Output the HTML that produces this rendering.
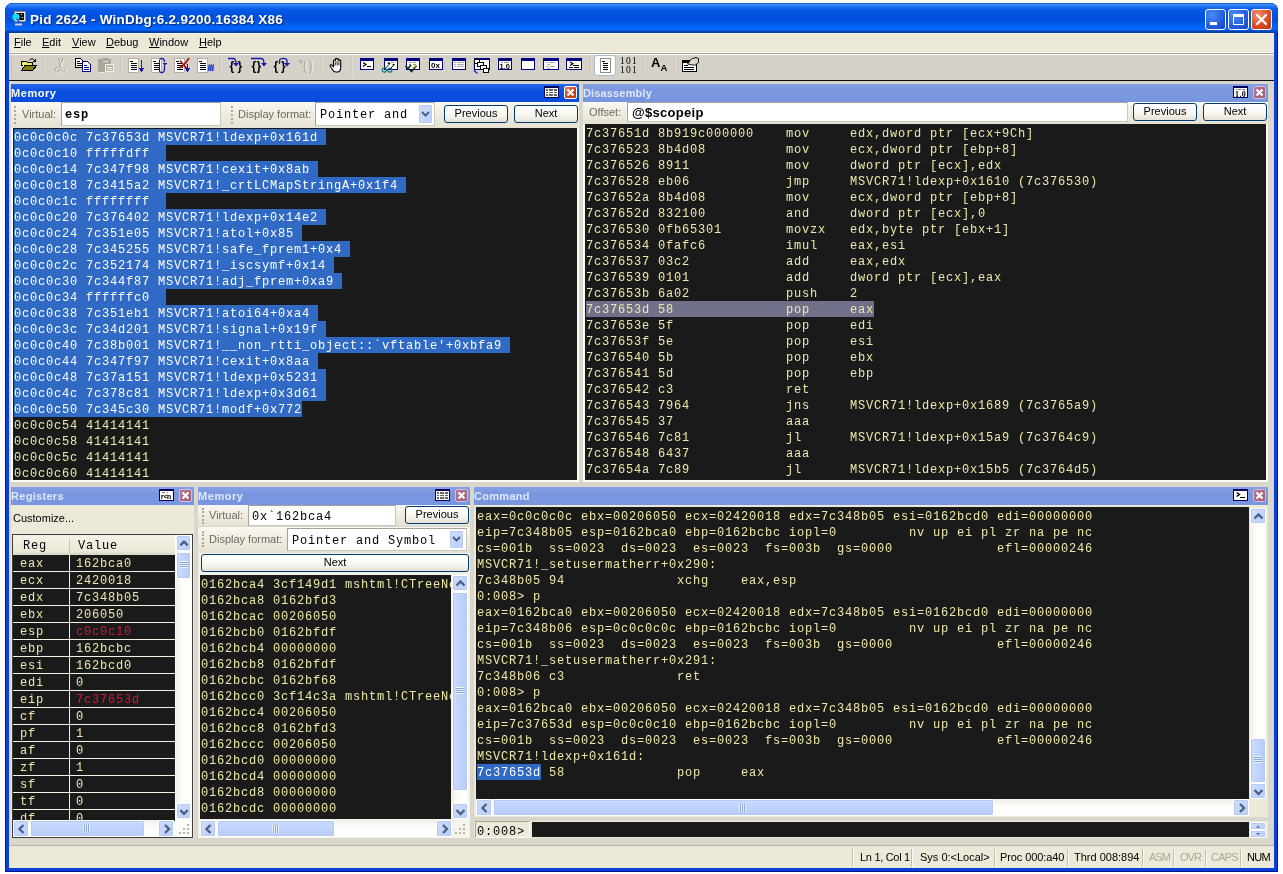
<!DOCTYPE html>
<html lang="en"><head><meta charset="utf-8"><title>Pid 2624 - WinDbg:6.2.9200.16384 X86</title>
<style>
html,body{margin:0;padding:0}
body{width:1283px;height:874px;overflow:hidden;background:#fff;position:relative;font-family:"Liberation Sans",sans-serif;font-size:11px;color:#000}
div,span{box-sizing:border-box}
.abs,.blk,.ttl,.tb,.btn,.inp,.sbv,.sbh,.ico{position:absolute}
.mono{font-family:"Liberation Mono",monospace;font-size:12px;letter-spacing:.8px;line-height:16px;white-space:pre;color:#eee8aa}
.blk{background:#1a1a1a;overflow:hidden;padding:1px 0 0 1px;white-space:normal}
.ln{height:16px;white-space:pre;line-height:18px}
.sel{background:#316ac5;color:#fff;display:inline-block;height:16px;line-height:18px;vertical-align:top}
.cur{background:#70708a;color:#eee8aa;display:inline-block;height:16px;line-height:18px;vertical-align:top}
.red{color:#dc143c}
/* window */
#win{position:absolute;left:5px;top:3px;width:1273px;height:869px;background:#0a40d8;border-radius:8px 8px 0 0;overflow:hidden;box-shadow:inset 1px 0 0 #0019b0,inset -1px 0 0 #00138c,inset 0 -1px 0 #00138c}
#cap{position:absolute;left:0;top:0;width:1273px;height:30px;background:linear-gradient(#0a40b8 0,#3a8cfa 1px,#2f80f6 2.5px,#0a5ce8 6px,#0054e2 10px,#0050dc 17px,#0262f6 24px,#0266ff 26.5px,#0a44b4 28.5px,#0a3590 30px)}
#capt{position:absolute;left:25px;top:7px;font:bold 13.5px "Liberation Sans",sans-serif;color:#fff;letter-spacing:.26px;text-shadow:1px 1px 1px #0a2a78;white-space:pre}
#client{position:absolute;left:9px;top:33px;width:1265px;height:835px;background:#d9d6cc;box-shadow:inset 1px 0 0 #c6d6f8,inset -1px 0 0 #c5d2f3}
#menu{position:absolute;left:9px;top:33px;width:1265px;height:20px;background:#ece9d8;border-top:1px solid #f6f8fc;border-bottom:1px solid #fdfcf8}
#menu span{position:absolute;top:2px;font-size:11px;white-space:pre}
#tool{position:absolute;left:9px;top:53px;width:1265px;height:28px;background:#d5d1c8;border-top:1px solid #a9a696;border-bottom:1px solid #0c0c0c;box-shadow:inset 0 1px 0 #fdfcf8}
.cb{position:absolute;top:6px;width:21px;height:21px;border:1px solid #fff;border-radius:3px;background:radial-gradient(circle at 30% 25%,#4a8af8,#1f56d8 70%,#1846bc)}
/* panels */
.ttl{height:18px;color:#fff;font:bold 11px "Liberation Sans",sans-serif;padding:3px 0 0 0;letter-spacing:.3px;white-space:pre;overflow:hidden}
.ttl.act{background:linear-gradient(#2a68ea,#0a50e0 40%,#0a4cdc)}
.ttl.ina{background:linear-gradient(#86a0e4,#7a96df 40%,#7896e0);color:#dfe8fb}
.tb{background:linear-gradient(#f9f8f3,#efecdf 50%,#e6e2d2)}
.lbl{position:absolute;color:#6b6b66;font-size:11px;white-space:pre}
.grip{position:absolute;width:3px;border-left:2px dotted #a9a79a}
.btn{border:1px solid #003c74;border-radius:3px;background:linear-gradient(#fff,#f6f5ef 60%,#e4e1d4);text-align:center;font-size:11px;white-space:pre}
.inp{background:#fff;border:1px solid #c9c7ba;border-top-color:#a5a395;border-left-color:#a5a395;white-space:pre;overflow:hidden}
.inp.mono{color:#000}
.xb{position:absolute;width:13px;height:13px;border:1px solid #fff;border-radius:2px}
.xb svg,.ico svg{display:block}
/* scrollbars */
.sbv,.sbh{background:#f6f5ef}
.sbv{background:linear-gradient(90deg,#f0eee6,#fdfdfb 40%,#fefefd)}
.sbh{background:linear-gradient(#f0eee6,#fdfdfb 40%,#fefefd)}
.sa{position:absolute;width:15px;height:15px;border:1px solid #fff;border-radius:2px;background:linear-gradient(135deg,#cfddfd,#bccffb);box-shadow:0 0 0 1px #b7caf5 inset}
.sa svg{position:absolute;left:0;top:0}
.th{position:absolute;border:1px solid #fff;border-radius:2px;background:linear-gradient(90deg,#cadcff,#c0d3fc 50%,#b8cbf6);box-shadow:0 0 0 1px #b7caf5 inset}
.thh{position:absolute;border:1px solid #fff;border-radius:2px;background:linear-gradient(#cadcff,#c0d3fc 50%,#b8cbf6);box-shadow:0 0 0 1px #b7caf5 inset}
/* registers */
#rl{position:absolute;left:12px;top:534px;width:181px;height:304px;border:1px solid #3c3c3c;background:#fdfdfb;overflow:hidden}
#rh{position:absolute;left:0;top:0;width:162px;height:20px;background:linear-gradient(#f4f2e8,#ece9d8 80%,#d8d4c4);color:#000}
#rh span{position:absolute;top:3px;color:#000}
#rb{position:absolute;left:0;top:20px;width:162px;height:266px;background:#f3f0e4;overflow:hidden}
.rrow{position:absolute;left:0;width:162px;height:16px;background:#1a1a1a}
.rc1{position:absolute;left:7px;top:1px}
.rc2{position:absolute;left:63px;top:1px}
.rrow:after{content:"";position:absolute;left:56px;top:0;width:1px;height:16px;background:#f3f0e4}
/* status */
#status{position:absolute;left:9px;top:845px;width:1265px;height:23px;background:#ece9d8;border-top:1px solid #b9b6a6}
#status span{position:absolute;top:5px;font-size:11px;white-space:pre}
#status i{position:absolute;top:3px;width:0;height:18px;border-left:1px solid #c2bfae;border-right:1px solid #fbfaf4}
#status .dis{color:#aca899}

.gv{position:absolute;left:3px;width:8px;height:7px;background:repeating-linear-gradient(#eef4fe 0,#eef4fe 1px,#8ca5d8 1px,#8ca5d8 2px)}
.gh{position:absolute;top:4px;height:8px;width:7px;background:repeating-linear-gradient(90deg,#eef4fe 0,#eef4fe 1px,#8ca5d8 1px,#8ca5d8 2px)}
#root{position:absolute;left:0;top:0;width:1283px;height:874px;will-change:transform}

</style></head>
<body>
<div id="root">
<div id="win"><div id="cap"></div></div>
<div id="client"></div>
<!-- caption -->
<svg class="abs" style="position:absolute;left:12px;top:11px" width="15" height="16" viewBox="0 0 15 16"><rect x="2.5" y="0.5" width="11" height="10" fill="#e8e6e0" stroke="#8a8a8a" stroke-width="1"/><rect x="4" y="2" width="8" height="7" fill="#0a0a10"/><circle cx="4" cy="6" r="3.6" fill="#18e0f0"/><path d="M4.500 7.500L11 14.500" stroke="#2a5adf" stroke-width="1.500"/><path d="M3 13.500h7" stroke="#d0d0d0" stroke-width="2"/><rect x="9" y="3" width="1" height="1" fill="#fff"/><rect x="10" y="6" width="1" height="1" fill="#fff"/></svg>
<div id="capt" style="left:30px;top:12px">Pid 2624 - WinDbg:6.2.9200.16384 X86</div>
<div class="cb" style="left:1205px;top:9px"><svg width="19" height="19"><rect x="4" y="12" width="7" height="3" fill="#fff"/></svg></div>
<div class="cb" style="left:1228px;top:9px"><svg width="19" height="19"><rect x="4.5" y="5.5" width="10" height="9" fill="none" stroke="#fff" stroke-width="1"/><rect x="4" y="4" width="11" height="3" fill="#fff"/></svg></div>
<div class="cb" style="left:1251px;top:9px;background:radial-gradient(circle at 30% 25%,#f09070,#d84a20 60%,#b83410)"><svg width="19" height="19"><path d="M5 5 L14 14 M14 5 L5 14" stroke="#fff" stroke-width="2.2" stroke-linecap="round"/></svg></div>
<!-- menu -->
<div id="menu"><span style="left:5px"><u>F</u>ile</span><span style="left:33px"><u>E</u>dit</span><span style="left:63px"><u>V</u>iew</span><span style="left:97px"><u>D</u>ebug</span><span style="left:140px"><u>W</u>indow</span><span style="left:190px"><u>H</u>elp</span></div>
<div id="tool"></div>
<div class="abs" style="left:11px;top:57px;width:1px;height:20px;background:#c8c4b9"></div>
<svg class="ico" style="left:20px;top:57px" width="18" height="16" viewBox="0 0 18 16" shape-rendering="crispEdges"><path d="M1.5 4.5h5l1 1h5v3h-11z" fill="#f0e850" stroke="#000"/><path d="M1.500 13.5l3.500-5h11.500l-4 5z" fill="#808010" stroke="#000"/><path d="M9 3.500c1.500-2 4.500-2.500 6 .5" fill="none" stroke="#000" shape-rendering="auto"/><path d="M16 1v4h-4z" fill="#000"/><path d="M3 6.500h2M3 8.500h1" stroke="#fff"/></svg>
<div class="abs" style="left:43px;top:57px;width:2px;height:19px;border-left:1px solid #ccc8be;border-right:1px solid #e0ddd4"></div>
<svg class="ico" style="left:54px;top:57px" width="13" height="16" viewBox="0 0 13 16" shape-rendering="crispEdges"><g shape-rendering="auto" fill="none"><path d="M4.500 1l3.500 9M9 1l-3.500 9" stroke="#a9a69a" stroke-width="1.300"/><circle cx="3.500" cy="12.500" r="2" stroke="#a9a69a" stroke-width="1.200"/><circle cx="9" cy="12.500" r="2" stroke="#a9a69a" stroke-width="1.200"/><path d="M5.500 2l3.500 9M10 2l-3.500 9" stroke="#fbfaf6" stroke-width=".7"/><circle cx="4.300" cy="13.300" r="2" stroke="#fbfaf6" stroke-width=".6"/><circle cx="9.800" cy="13.300" r="2" stroke="#fbfaf6" stroke-width=".6"/></g></svg>
<svg class="ico" style="left:75px;top:58px" width="17" height="15" viewBox="0 0 17 15" shape-rendering="crispEdges"><path d="M0.500 0.500h5l3 3v6h-8z" fill="#fff" stroke="#000"/><path d="M2 3.500h3M2 5.500h5M2 7.500h5" stroke="#000"/><path d="M7.500 3.500h5l3 3v7h-8z" fill="#fff" stroke="#000080" stroke-width="1.200"/><path d="M9 7.500h3M9 9.500h5M9 11.500h5" stroke="#000080"/></svg>
<svg class="ico" style="left:98px;top:57px" width="17" height="16" viewBox="0 0 17 16" shape-rendering="crispEdges"><rect x="0.500" y="2.500" width="12" height="12" fill="#a9a69a" stroke="#a9a69a"/><rect x="4" y="1" width="6" height="3" fill="#a9a69a"/><path d="M5 4.500h5" stroke="#e8e5dc"/><rect x="7.500" y="7.500" width="8" height="7" fill="#b5b2a6" stroke="#f4f2ea"/><path d="M9 10.500h5M9 12.500h5" stroke="#f4f2ea"/><path d="M2 15.500h5" stroke="#f4f2ea"/></svg>
<div class="abs" style="left:120px;top:57px;width:2px;height:19px;border-left:1px solid #ccc8be;border-right:1px solid #e0ddd4"></div>
<svg class="ico" style="left:128px;top:57px" width="18" height="17" viewBox="0 0 18 17" shape-rendering="crispEdges"><rect x="0.5" y="1.5" width="10" height="14" fill="#fff" stroke="#b4b0a6"/><path d="M2 4.5h3M3 6.5h6M3 8.5h6M3 10.5h6M3 12.5h6" stroke="#000" stroke-width="1"/><path d="M13.500 3v10" stroke="#1818b0" stroke-width="1.400"/><path d="M10.500 11h6l-3 4z" fill="#1818b0"/></svg>
<svg class="ico" style="left:151px;top:57px" width="18" height="17" viewBox="0 0 18 17" shape-rendering="crispEdges"><rect x="0.5" y="1.5" width="10" height="14" fill="#fff" stroke="#b4b0a6"/><path d="M2 4.5h3M3 6.5h6M3 8.5h6M3 10.5h6M3 12.5h6" stroke="#000" stroke-width="1"/><path d="M8.500 2.500c2.500-2 5-1 5 2.500M8.500 14.500c2.500 2 5 1 5-2.500V9" stroke="#1818b0" stroke-width="1.300" fill="none" shape-rendering="auto"/><path d="M8.500 2.500v12" stroke="#1818b0" stroke-width="1"/><path d="M11 5.500h5.500l-2.750 3.500z" fill="#1818b0"/></svg>
<svg class="ico" style="left:174px;top:57px" width="18" height="17" viewBox="0 0 18 17" shape-rendering="crispEdges"><rect x="0.5" y="1.5" width="10" height="14" fill="#fff" stroke="#b4b0a6"/><path d="M2 4.5h3M3 6.5h6M3 8.5h6M3 10.5h6M3 12.5h6" stroke="#000" stroke-width="1"/><g shape-rendering="auto"><path d="M6 3.500l7 8.500M5 11c3-1 7-5 10-10" stroke="#a01010" stroke-width="1.600" fill="none"/></g><path d="M13.500 7v6" stroke="#1818b0" stroke-width="1.400"/><path d="M10.500 11h6l-3 4z" fill="#1818b0"/></svg>
<svg class="ico" style="left:197px;top:57px" width="18" height="17" viewBox="0 0 18 17" shape-rendering="crispEdges"><rect x="0.5" y="1.5" width="10" height="14" fill="#fff" stroke="#b4b0a6"/><path d="M2 4.5h3M3 6.5h6M3 8.5h6M3 10.5h6M3 12.5h6" stroke="#000" stroke-width="1"/><g shape-rendering="auto"><path d="M12 7.500c1 1.500-1 3 0 6.500M14 7.500c1 1.500-1 3 0 6.500M16 7.500c1 1.500-1 3 0 6.500" stroke="#2038c8" stroke-width="1.500" fill="none"/></g></svg>
<div class="abs" style="left:220px;top:57px;width:2px;height:19px;border-left:1px solid #ccc8be;border-right:1px solid #e0ddd4"></div>
<svg class="ico" style="left:227px;top:56px" width="20" height="18" viewBox="0 0 20 18" shape-rendering="crispEdges"><text x="2.5" y="14" font-family="Liberation Sans,sans-serif" font-size="12" font-weight="bold" fill="#000">{</text><text x="10.5" y="14" font-family="Liberation Sans,sans-serif" font-size="12" font-weight="bold" fill="#000">}</text><g shape-rendering="auto"><path d="M1 2.500h5c2.500 0 3 2 3 5" stroke="#1818b0" stroke-width="1.300" fill="none"/><path d="M6 7h6l-3 3.500z" fill="#1818b0"/></g></svg>
<svg class="ico" style="left:250px;top:56px" width="20" height="18" viewBox="0 0 20 18" shape-rendering="crispEdges"><text x="1.5" y="14" font-family="Liberation Sans,sans-serif" font-size="12" font-weight="bold" fill="#000">{</text><text x="6.5" y="14" font-family="Liberation Sans,sans-serif" font-size="12" font-weight="bold" fill="#000">}</text><g shape-rendering="auto"><path d="M1 2.500h10c2.500 0 3 2 3 5" stroke="#1818b0" stroke-width="1.300" fill="none"/><path d="M11 7h6l-3 3.500z" fill="#1818b0"/></g></svg>
<svg class="ico" style="left:273px;top:56px" width="20" height="18" viewBox="0 0 20 18" shape-rendering="crispEdges"><text x="0.5" y="14" font-family="Liberation Sans,sans-serif" font-size="12" font-weight="bold" fill="#000">{</text><text x="8" y="14" font-family="Liberation Sans,sans-serif" font-size="12" font-weight="bold" fill="#000">}</text><g shape-rendering="auto"><path d="M6.500 8V5c0-3.500 7.500-3.500 7.500 0v2.500" stroke="#1818b0" stroke-width="1.300" fill="none"/><path d="M11 7h6l-3 3.500z" fill="#1818b0"/></g></svg>
<svg class="ico" style="left:297px;top:56px" width="20" height="18" viewBox="0 0 20 18" shape-rendering="crispEdges"><text x="6.5" y="14" font-family="Liberation Sans,sans-serif" font-size="12" font-weight="bold" fill="#fbfaf6">{</text><text x="12.5" y="14" font-family="Liberation Sans,sans-serif" font-size="12" font-weight="bold" fill="#fbfaf6">}</text><text x="5.5" y="14" font-family="Liberation Sans,sans-serif" font-size="12" font-weight="bold" fill="#b5b2a6">{</text><text x="11.5" y="14" font-family="Liberation Sans,sans-serif" font-size="12" font-weight="bold" fill="#b5b2a6">}</text><path d="M1 5.500h4M3 3.500l2 2-2 2" stroke="#b5b2a6" fill="none"/></svg>
<div class="abs" style="left:321px;top:57px;width:2px;height:19px;border-left:1px solid #ccc8be;border-right:1px solid #e0ddd4"></div>
<svg class="ico" style="left:329px;top:57px" width="15" height="16" viewBox="0 0 15 16" shape-rendering="crispEdges"><g shape-rendering="auto"><path d="M4.500 9.500V4c0-1.300 1.800-1.300 1.800 0V2.300c0-1.300 1.800-1.300 1.800 0V2.800c0-1.300 1.800-1.300 1.800 0V4c0-1.200 1.800-1.200 1.800 0v6.500c0 2.500-1.300 4.500-3.500 4.500H7c-1.700 0-2.700-.9-3.500-2.600L1.300 9.200c-.6-1.300 1-2 1.700-.9z" fill="#fff" stroke="#000" stroke-width="1.100"/><path d="M6.300 4.500v4M8.100 3.500v5M9.900 4.500v4" stroke="#000" stroke-width=".8"/></g></svg>
<div class="abs" style="left:351px;top:57px;width:2px;height:19px;border-left:1px solid #ccc8be;border-right:1px solid #e0ddd4"></div>
<svg class="ico" style="left:360px;top:58px" width="14" height="12" viewBox="0 0 14 12" shape-rendering="crispEdges"><rect x="0.5" y="0.5" width="13" height="11" fill="#fff" stroke="#000080"/><rect x="0" y="0" width="14" height="3" fill="#000080"/><path d="M3 4.500l3 2-3 2" stroke="#000" fill="none" stroke-width="1.200" shape-rendering="auto"/><path d="M7 8.500h4" stroke="#000"/></svg>
<svg class="ico" style="left:381px;top:58px" width="18" height="16" viewBox="0 0 18 16" shape-rendering="crispEdges"><g transform="translate(3,0)"><rect x="0.5" y="0.5" width="13" height="11" fill="#fff" stroke="#000080"/><rect x="0" y="0" width="14" height="3" fill="#000080"/><path d="M3 4.500h3M7 4.500h3" stroke="#999"/></g><g shape-rendering="auto" fill="none"><circle cx="3.200" cy="12.200" r="2" stroke="#107878" stroke-width="1.200"/><circle cx="8.800" cy="12.200" r="2" stroke="#107878" stroke-width="1.200"/><path d="M5.200 12h1.600" stroke="#107878"/><path d="M4 10.500l5-5M9.500 10.500l4-4M9 5.500h-2M13.500 6.500h-2" stroke="#000" stroke-width="1"/></g></svg>
<svg class="ico" style="left:405px;top:58px" width="16" height="16" viewBox="0 0 16 16" shape-rendering="crispEdges"><g transform="translate(1,0)"><rect x="0.5" y="0.5" width="13" height="11" fill="#fff" stroke="#000080"/><rect x="0" y="0" width="14" height="3" fill="#000080"/><path d="M3 4.500h3M7 4.500h3M3 6.500h2M7 6.500h3" stroke="#999"/></g><g shape-rendering="auto" fill="none"><path d="M0.500 8l2.500 2.500 3-3.500" stroke="#103010" stroke-width="1.600"/><path d="M4 11l2.500 2.500 5-6" stroke="#103010" stroke-width="1.600"/><path d="M9 9l2-2" stroke="#d8c030" stroke-width="1.400"/></g></svg>
<svg class="ico" style="left:429px;top:58px" width="14" height="12" viewBox="0 0 14 12" shape-rendering="crispEdges"><rect x="0.5" y="0.5" width="13" height="11" fill="#fff" stroke="#000080"/><rect x="0" y="0" width="14" height="3" fill="#000080"/><text x="2" y="9.500" font-family="Liberation Sans,sans-serif" font-size="8" font-weight="bold" fill="#000">0x</text></svg>
<svg class="ico" style="left:452px;top:58px" width="14" height="12" viewBox="0 0 14 12" shape-rendering="crispEdges"><rect x="0.5" y="0.5" width="13" height="11" fill="#fff" stroke="#000080"/><rect x="0" y="0" width="14" height="3" fill="#000080"/><path d="M2 4.500h2M5 4.500h7M2 6.500h2M5 6.500h7M2 8.500h2M5 8.500h7" stroke="#aaa"/></svg>
<svg class="ico" style="left:473px;top:58px" width="18" height="17" viewBox="0 0 18 17" shape-rendering="crispEdges"><path d="M1.500 2v11l3 2.500" stroke="#2020b0" fill="none" stroke-width="1.300" shape-rendering="auto"/><rect x="1.500" y="0.500" width="15" height="11" fill="#fff" stroke="#000080"/><rect x="1" y="0" width="16" height="2" fill="#000080"/><rect x="1.500" y="1.500" width="5" height="4" fill="#fff" stroke="#000"/><rect x="4.500" y="4.500" width="6" height="4" fill="#fff" stroke="#000"/><rect x="7.500" y="7.500" width="6" height="4" fill="#fff" stroke="#000"/><rect x="10.500" y="10.500" width="5" height="4" fill="#fff" stroke="#000"/></svg>
<svg class="ico" style="left:498px;top:58px" width="14" height="12" viewBox="0 0 14 12" shape-rendering="crispEdges"><rect x="0.5" y="0.5" width="13" height="11" fill="#fff" stroke="#000080"/><rect x="0" y="0" width="14" height="3" fill="#000080"/><path d="M3 4.500h2M6 4.500h5" stroke="#999"/><text x="1.500" y="10.500" font-family="Liberation Sans,sans-serif" font-size="7.500" font-weight="bold" fill="#000">1.0</text></svg>
<svg class="ico" style="left:521px;top:58px" width="14" height="12" viewBox="0 0 14 12" shape-rendering="crispEdges"><rect x="0.5" y="0.5" width="13" height="11" fill="#fff" stroke="#000080"/><rect x="0" y="0" width="14" height="3" fill="#000080"/></svg>
<svg class="ico" style="left:543px;top:58px" width="16" height="12" viewBox="0 0 16 12" shape-rendering="crispEdges"><rect x="0.5" y="0.5" width="15" height="11" fill="#fff" stroke="#000080"/><rect x="0" y="0" width="16" height="3" fill="#000080"/><path d="M3 4.500h2M6 4.500h6M4 6.500h3M3 8.500h2M6 8.500h6M4 10.500h3" stroke="#aaa"/></svg>
<svg class="ico" style="left:566px;top:58px" width="16" height="12" viewBox="0 0 16 12" shape-rendering="crispEdges"><rect x="0.5" y="0.5" width="15" height="11" fill="#fff" stroke="#000080"/><rect x="0" y="0" width="16" height="3" fill="#000080"/><path d="M4 4l3 1.800-3 1.800" stroke="#000" fill="none" stroke-width="1.200" shape-rendering="auto"/><path d="M7 7.500h6M3 9.500h4M8 9.500h5" stroke="#000"/></svg>
<div class="abs" style="left:590px;top:57px;width:2px;height:19px;border-left:1px solid #ccc8be;border-right:1px solid #e0ddd4"></div>
<div class="abs" style="left:594px;top:55px;width:22px;height:21px;background:#fdfdfb;border:1px solid #a8bcd8;border-radius:3px"></div>
<svg class="ico" style="left:600px;top:58px" width="11" height="15" viewBox="0 0 11 15" shape-rendering="crispEdges"><rect x="0.500" y="0.500" width="10" height="14" fill="#fff" stroke="#8c8c8c"/><path d="M2 3.500h3M3 5.500h5M3 7.500h5M3 9.500h5M3 11.500h5" stroke="#000"/></svg>
<div class="abs" style="left:620px;top:57px;font:9.500px/8.500px 'Liberation Serif',serif;letter-spacing:1.300px;color:#000;white-space:pre">101<br>101</div>
<div class="abs" style="left:643px;top:57px;width:2px;height:19px;border-left:1px solid #ccc8be;border-right:1px solid #e0ddd4"></div>
<div class="abs" style="left:651px;top:55px;font:bold 13px/16px 'Liberation Sans',sans-serif;color:#000;white-space:pre">A<span style="font-size:9.500px;position:relative;top:4px;left:0px">A</span></div>
<div class="abs" style="left:674px;top:57px;width:2px;height:19px;border-left:1px solid #ccc8be;border-right:1px solid #e0ddd4"></div>
<svg class="ico" style="left:682px;top:57px" width="17" height="15" viewBox="0 0 17 15" shape-rendering="crispEdges"><rect x="0.500" y="3.500" width="14" height="11" fill="#fff" stroke="#000"/><rect x="1" y="4" width="13" height="2" fill="#000"/><path d="M2 8.500h4M2 10.500h10M2 12.500h10" stroke="#000"/><g shape-rendering="auto"><path d="M5.500 7l4-5 4.500-1.500 2.500 1v4l-3 2.500h-3z" fill="#d4d0c8" stroke="#000" stroke-width=".9"/><path d="M8 5l3-3M9.500 6.500l3-3" stroke="#fff" stroke-width=".8"/></g></svg>

<!-- top-left memory -->
<div class="ttl act" style="left:11px;top:84px;width:568px;letter-spacing:.55px">Memory</div>
<div class="tb" style="left:11px;top:102px;width:568px;height:26px"></div>
<div class="abs" style="left:11px;top:128px;width:568px;height:354px;background:#fcfbf8"></div>
<div class="grip" style="left:14px;top:106px;height:18px"></div>
<div class="lbl" style="left:22px;top:108px">Virtual:</div>
<div class="inp mono" style="left:61px;top:102px;width:160px;height:24px;padding:4px 0 0 3px;font-weight:bold">esp</div>
<div class="grip" style="left:231px;top:106px;height:18px"></div>
<div class="lbl" style="left:238px;top:108px">Display format:</div>
<div class="inp mono" style="left:315px;top:102px;width:120px;height:24px;padding:4px 0 0 4px">Pointer and </div>
<div class="sa" style="left:418px;top:104px;height:20px"><svg width="13" height="18"><path d="M3 7 L6.5 10.5 L10 7" fill="none" stroke="#4d6185" stroke-width="2"/></svg></div>
<div class="btn" style="left:444px;top:105px;width:64px;height:18px;line-height:15px">Previous</div>
<div class="btn" style="left:514px;top:105px;width:64px;height:18px;line-height:15px">Next</div>
<!-- disassembly -->
<div class="ttl ina" style="left:583px;top:84px;width:685px;letter-spacing:.15px">Disassembly</div>
<div class="tb" style="left:583px;top:102px;width:685px;height:22px"></div>
<div class="abs" style="left:583px;top:124px;width:685px;height:358px;background:#fcfbf8"></div>
<div class="lbl" style="left:589px;top:106px">Offset:</div>
<div class="inp" style="left:627px;top:102px;width:501px;height:20px;padding:2px 0 0 4px;font:bold 13px 'Liberation Sans',sans-serif;letter-spacing:.3px">@$scopeip</div>
<div class="btn" style="left:1133px;top:103px;width:64px;height:18px;line-height:15px">Previous</div>
<div class="btn" style="left:1203px;top:103px;width:64px;height:18px;line-height:15px">Next</div>
<!-- registers -->
<div class="ttl ina" style="left:11px;top:487px;width:183px">Registers</div>
<div class="tb" style="left:11px;top:505px;width:183px;height:333px;background:#ece9d8"></div>
<div class="abs" style="left:13px;top:512px;font-size:11px">Customize...</div>
<!-- memory 2 -->
<div class="ttl ina" style="left:198px;top:487px;width:272px;letter-spacing:.55px">Memory</div>
<div class="abs" style="left:198px;top:505px;width:272px;height:333px;background:#f1efe6"></div>
<div class="tb" style="left:198px;top:505px;width:272px;height:22px;border-bottom:1px solid #d8d5c8"></div>
<div class="tb" style="left:198px;top:527px;width:272px;height:26px"></div>
<div class="grip" style="left:202px;top:508px;height:16px"></div>
<div class="lbl" style="left:209px;top:509px">Virtual:</div>
<div class="inp mono" style="left:248px;top:505px;width:148px;height:21px;padding:3px 0 0 3px">0x`162bca4</div>
<div class="btn" style="left:405px;top:506px;width:64px;height:18px;line-height:15px">Previous</div>
<div class="grip" style="left:202px;top:531px;height:16px"></div>
<div class="lbl" style="left:209px;top:533px">Display format:</div>
<div class="inp mono" style="left:287px;top:528px;width:180px;height:23px;padding:4px 0 0 4px">Pointer and Symbol</div>
<div class="sa" style="left:449px;top:530px;height:19px"><svg width="13" height="17"><path d="M3 6 L6.5 9.5 L10 6" fill="none" stroke="#4d6185" stroke-width="2"/></svg></div>
<div class="btn" style="left:201px;top:554px;width:268px;height:18px;line-height:15px">Next</div>
<div class="abs" style="left:199px;top:574px;width:270px;height:264px;background:#f4f3ee"></div>
<!-- command -->
<div class="ttl ina" style="left:474px;top:487px;width:794px">Command</div>
<div class="abs" style="left:474px;top:505px;width:794px;height:333px;background:#ece9d8"></div>
<div class="abs" style="left:474px;top:817px;width:794px;height:4px;background:#d9d6cc"></div>
<svg class="ico" style="left:544px;top:86px" width="15" height="12" viewBox="0 0 15 12" shape-rendering="crispEdges"><rect x="0" y="0" width="15" height="12" fill="#000060"/><rect x="1" y="2" width="13" height="9" fill="#fff"/><path d="M2 4h2M5 4h4M10 4h3M2 6.500h2M5 6.500h4M10 6.500h3M2 9h2M5 9h4M10 9h3" stroke="#666" stroke-width="1.600"/></svg>
<div class="xb" style="left:564px;top:86px;background:linear-gradient(135deg,#e88a6a,#d04a20 50%,#b83810);border-color:#fff"><svg width="11" height="11" viewBox="0 0 11 11"><path d="M2.500 2.500l6 6M8.500 2.500l-6 6" stroke="#fff" stroke-width="2.200"/></svg></div>
<svg class="ico" style="left:1233px;top:86px" width="15" height="12" viewBox="0 0 15 12" shape-rendering="crispEdges"><rect x="0" y="0" width="15" height="12" fill="#000060"/><rect x="1" y="2" width="13" height="9" fill="#fff"/><path d="M3 3.500h1M5 3.500h3M9 3.500h3" stroke="#777"/><text x="2" y="10.500" font-family="Liberation Serif,serif" font-size="8" font-weight="bold" fill="#000" letter-spacing=".4">1.0</text></svg>
<div class="xb" style="left:1253px;top:86px;background:linear-gradient(135deg,#b87890,#ae6880 50%,#a45c78);border-color:#cdbfe0"><svg width="11" height="11" viewBox="0 0 11 11"><path d="M2.500 2.500l6 6M8.500 2.500l-6 6" stroke="#fff" stroke-width="2.200"/></svg></div>
<svg class="ico" style="left:159px;top:489px" width="15" height="12" viewBox="0 0 15 12" shape-rendering="crispEdges"><rect x="0" y="0" width="15" height="12" fill="#000060"/><rect x="1" y="2" width="13" height="9" fill="#fff"/><path d="M3 3.500h3M8 3.500h1" stroke="#777"/><text x="1.500" y="10" font-family="Liberation Mono,monospace" font-size="7" font-weight="bold" fill="#000" letter-spacing="-1">r&lt;n</text></svg>
<div class="xb" style="left:179px;top:489px;background:linear-gradient(135deg,#b87890,#ae6880 50%,#a45c78);border-color:#cdbfe0"><svg width="11" height="11" viewBox="0 0 11 11"><path d="M2.500 2.500l6 6M8.500 2.500l-6 6" stroke="#fff" stroke-width="2.200"/></svg></div>
<svg class="ico" style="left:435px;top:489px" width="15" height="12" viewBox="0 0 15 12" shape-rendering="crispEdges"><rect x="0" y="0" width="15" height="12" fill="#000060"/><rect x="1" y="2" width="13" height="9" fill="#fff"/><path d="M2 4h2M5 4h4M10 4h3M2 6.500h2M5 6.500h4M10 6.500h3M2 9h2M5 9h4M10 9h3" stroke="#666" stroke-width="1.600"/></svg>
<div class="xb" style="left:455px;top:489px;background:linear-gradient(135deg,#b87890,#ae6880 50%,#a45c78);border-color:#cdbfe0"><svg width="11" height="11" viewBox="0 0 11 11"><path d="M2.500 2.500l6 6M8.500 2.500l-6 6" stroke="#fff" stroke-width="2.200"/></svg></div>
<svg class="ico" style="left:1233px;top:489px" width="15" height="12" viewBox="0 0 15 12" shape-rendering="crispEdges"><rect x="0" y="0" width="15" height="12" fill="#000060"/><rect x="1" y="2" width="13" height="9" fill="#fff"/><path d="M3.500 3.500l3 2-3 2" stroke="#000" stroke-width="1.400" fill="none" shape-rendering="auto"/><path d="M7 8.500h5" stroke="#000" stroke-width="1.600"/></svg>
<div class="xb" style="left:1253px;top:489px;background:linear-gradient(135deg,#b87890,#ae6880 50%,#a45c78);border-color:#cdbfe0"><svg width="11" height="11" viewBox="0 0 11 11"><path d="M2.500 2.500l6 6M8.500 2.500l-6 6" stroke="#fff" stroke-width="2.200"/></svg></div>
<div class="blk mono" style="left:13px;top:128px;width:564px;height:352px">
<div class="ln"><span class="sel">0c0c0c0c 7c37653d MSVCR71!ldexp+0x161d </span></div>
<div class="ln"><span class="sel">0c0c0c10 fffffdff  </span></div>
<div class="ln"><span class="sel">0c0c0c14 7c347f98 MSVCR71!cexit+0x8ab </span></div>
<div class="ln"><span class="sel">0c0c0c18 7c3415a2 MSVCR71!_crtLCMapStringA+0x1f4 </span></div>
<div class="ln"><span class="sel">0c0c0c1c ffffffff  </span></div>
<div class="ln"><span class="sel">0c0c0c20 7c376402 MSVCR71!ldexp+0x14e2 </span></div>
<div class="ln"><span class="sel">0c0c0c24 7c351e05 MSVCR71!atol+0x85 </span></div>
<div class="ln"><span class="sel">0c0c0c28 7c345255 MSVCR71!safe_fprem1+0x4 </span></div>
<div class="ln"><span class="sel">0c0c0c2c 7c352174 MSVCR71!_iscsymf+0x14 </span></div>
<div class="ln"><span class="sel">0c0c0c30 7c344f87 MSVCR71!adj_fprem+0xa9 </span></div>
<div class="ln"><span class="sel">0c0c0c34 ffffffc0  </span></div>
<div class="ln"><span class="sel">0c0c0c38 7c351eb1 MSVCR71!atoi64+0xa4 </span></div>
<div class="ln"><span class="sel">0c0c0c3c 7c34d201 MSVCR71!signal+0x19f </span></div>
<div class="ln"><span class="sel">0c0c0c40 7c38b001 MSVCR71!__non_rtti_object::`vftable&#x27;+0xbfa9 </span></div>
<div class="ln"><span class="sel">0c0c0c44 7c347f97 MSVCR71!cexit+0x8aa </span></div>
<div class="ln"><span class="sel">0c0c0c48 7c37a151 MSVCR71!ldexp+0x5231 </span></div>
<div class="ln"><span class="sel">0c0c0c4c 7c378c81 MSVCR71!ldexp+0x3d61 </span></div>
<div class="ln"><span class="sel">0c0c0c50 7c345c30 MSVCR71!modf+0x772</span></div>
<div class="ln">0c0c0c54 41414141</div>
<div class="ln">0c0c0c58 41414141</div>
<div class="ln">0c0c0c5c 41414141</div>
<div class="ln">0c0c0c60 41414141</div>
</div>
<div class="blk mono" style="left:585px;top:124px;width:681px;height:356px">
<div class="ln">7c37651d 8b919c000000    mov     edx,dword ptr [ecx+9Ch]</div>
<div class="ln">7c376523 8b4d08          mov     ecx,dword ptr [ebp+8]</div>
<div class="ln">7c376526 8911            mov     dword ptr [ecx],edx</div>
<div class="ln">7c376528 eb06            jmp     MSVCR71!ldexp+0x1610 (7c376530)</div>
<div class="ln">7c37652a 8b4d08          mov     ecx,dword ptr [ebp+8]</div>
<div class="ln">7c37652d 832100          and     dword ptr [ecx],0</div>
<div class="ln">7c376530 0fb65301        movzx   edx,byte ptr [ebx+1]</div>
<div class="ln">7c376534 0fafc6          imul    eax,esi</div>
<div class="ln">7c376537 03c2            add     eax,edx</div>
<div class="ln">7c376539 0101            add     dword ptr [ecx],eax</div>
<div class="ln">7c37653b 6a02            push    2</div>
<div class="ln"><span class="cur">7c37653d 58              pop     eax</span></div>
<div class="ln">7c37653e 5f              pop     edi</div>
<div class="ln">7c37653f 5e              pop     esi</div>
<div class="ln">7c376540 5b              pop     ebx</div>
<div class="ln">7c376541 5d              pop     ebp</div>
<div class="ln">7c376542 c3              ret</div>
<div class="ln">7c376543 7964            jns     MSVCR71!ldexp+0x1689 (7c3765a9)</div>
<div class="ln">7c376545 37              aaa</div>
<div class="ln">7c376546 7c81            jl      MSVCR71!ldexp+0x15a9 (7c3764c9)</div>
<div class="ln">7c376548 6437            aaa</div>
<div class="ln">7c37654a 7c89            jl      MSVCR71!ldexp+0x15b5 (7c3764d5)</div>
</div>
<div id="rl"><div id="rh"><span class="mono" style="left:10px">Reg</span><span class="mono" style="left:65px">Value</span><div style="position:absolute;left:56px;top:3px;width:1px;height:14px;background:#c9c6b8"></div></div>
<div id="rb">
<div class="rrow" style="top:0px"><span class="rc1 mono">eax</span><span class="rc2 mono">162bca0</span></div>
<div class="rrow" style="top:17px"><span class="rc1 mono">ecx</span><span class="rc2 mono">2420018</span></div>
<div class="rrow" style="top:34px"><span class="rc1 mono">edx</span><span class="rc2 mono">7c348b05</span></div>
<div class="rrow" style="top:51px"><span class="rc1 mono">ebx</span><span class="rc2 mono">206050</span></div>
<div class="rrow" style="top:68px"><span class="rc1 mono">esp</span><span class="rc2 mono red">c0c0c10</span></div>
<div class="rrow" style="top:85px"><span class="rc1 mono">ebp</span><span class="rc2 mono">162bcbc</span></div>
<div class="rrow" style="top:102px"><span class="rc1 mono">esi</span><span class="rc2 mono">162bcd0</span></div>
<div class="rrow" style="top:119px"><span class="rc1 mono">edi</span><span class="rc2 mono">0</span></div>
<div class="rrow" style="top:136px"><span class="rc1 mono">eip</span><span class="rc2 mono red">7c37653d</span></div>
<div class="rrow" style="top:153px"><span class="rc1 mono">cf</span><span class="rc2 mono">0</span></div>
<div class="rrow" style="top:170px"><span class="rc1 mono">pf</span><span class="rc2 mono">1</span></div>
<div class="rrow" style="top:187px"><span class="rc1 mono">af</span><span class="rc2 mono">0</span></div>
<div class="rrow" style="top:204px"><span class="rc1 mono">zf</span><span class="rc2 mono">1</span></div>
<div class="rrow" style="top:221px"><span class="rc1 mono">sf</span><span class="rc2 mono">0</span></div>
<div class="rrow" style="top:238px"><span class="rc1 mono">tf</span><span class="rc2 mono">0</span></div>
<div class="rrow" style="top:255px"><span class="rc1 mono">df</span><span class="rc2 mono">0</span></div>
</div></div>
<div class="blk mono" style="left:200px;top:575px;width:251px;height:244px">
<div class="ln">0162bca4 3cf149d1 mshtml!CTreeNode::GetFancyFormat</div>
<div class="ln">0162bca8 0162bfd3</div>
<div class="ln">0162bcac 00206050</div>
<div class="ln">0162bcb0 0162bfdf</div>
<div class="ln">0162bcb4 00000000</div>
<div class="ln">0162bcb8 0162bfdf</div>
<div class="ln">0162bcbc 0162bf68</div>
<div class="ln">0162bcc0 3cf14c3a mshtml!CTreeNode::GetCharFormat</div>
<div class="ln">0162bcc4 00206050</div>
<div class="ln">0162bcc8 0162bfd3</div>
<div class="ln">0162bccc 00206050</div>
<div class="ln">0162bcd0 00000000</div>
<div class="ln">0162bcd4 00000000</div>
<div class="ln">0162bcd8 00000000</div>
<div class="ln">0162bcdc 00000000</div>
</div>
<div class="blk mono" style="left:476px;top:507px;width:773px;height:292px">
<div class="ln">eax=0c0c0c0c ebx=00206050 ecx=02420018 edx=7c348b05 esi=0162bcd0 edi=00000000</div>
<div class="ln">eip=7c348b05 esp=0162bca0 ebp=0162bcbc iopl=0         nv up ei pl zr na pe nc</div>
<div class="ln">cs=001b  ss=0023  ds=0023  es=0023  fs=003b  gs=0000             efl=00000246</div>
<div class="ln">MSVCR71!_setusermatherr+0x290:</div>
<div class="ln">7c348b05 94              xchg    eax,esp</div>
<div class="ln">0:008&gt; p</div>
<div class="ln">eax=0162bca0 ebx=00206050 ecx=02420018 edx=7c348b05 esi=0162bcd0 edi=00000000</div>
<div class="ln">eip=7c348b06 esp=0c0c0c0c ebp=0162bcbc iopl=0         nv up ei pl zr na pe nc</div>
<div class="ln">cs=001b  ss=0023  ds=0023  es=0023  fs=003b  gs=0000             efl=00000246</div>
<div class="ln">MSVCR71!_setusermatherr+0x291:</div>
<div class="ln">7c348b06 c3              ret</div>
<div class="ln">0:008&gt; p</div>
<div class="ln">eax=0162bca0 ebx=00206050 ecx=02420018 edx=7c348b05 esi=0162bcd0 edi=00000000</div>
<div class="ln">eip=7c37653d esp=0c0c0c10 ebp=0162bcbc iopl=0         nv up ei pl zr na pe nc</div>
<div class="ln">cs=001b  ss=0023  ds=0023  es=0023  fs=003b  gs=0000             efl=00000246</div>
<div class="ln">MSVCR71!ldexp+0x161d:</div>
<div class="ln"><span class="sel">7c37653d</span> 58              pop     eax</div>
</div>
<div class="sbv" style="left:176px;top:535px;width:15px;height:284px"></div>
<div class="sa" style="left:176px;top:535px;width:15px;height:16px"><svg width="14" height="15" viewBox="0 0 15 15"><path d="M3.5 9.5 L7.5 5.5 L11.5 9.5" fill="none" stroke="#4d6185" stroke-width="2.4"/></svg></div>
<div class="sa" style="left:176px;top:803px;width:15px;height:16px"><svg width="14" height="15" viewBox="0 0 15 15"><path d="M3.5 6 L7.5 10 L11.5 6" fill="none" stroke="#4d6185" stroke-width="2.4"/></svg></div>
<div class="th" style="left:176px;top:552px;width:15px;height:27px"><b class="gv" style="top:8px"></b></div>
<div class="sbh" style="left:13px;top:820px;width:161px;height:17px"></div>
<div class="sa" style="left:13px;top:820px;width:16px;height:17px"><svg width="15" height="16" viewBox="0 0 15 15"><path d="M9.5 3.5 L5.5 7.5 L9.5 11.5" fill="none" stroke="#4d6185" stroke-width="2.4"/></svg></div>
<div class="sa" style="left:158px;top:820px;width:16px;height:17px"><svg width="15" height="16" viewBox="0 0 15 15"><path d="M6 3.5 L10 7.5 L6 11.5" fill="none" stroke="#4d6185" stroke-width="2.4"/></svg></div>
<div class="thh" style="left:30px;top:820px;width:115px;height:17px"><b class="gh" style="left:52px"></b></div>
<svg class="abs" style="position:absolute;left:176px;top:821px" width="16" height="16"><g fill="#b8b4a2"><rect x="11" y="3" width="2" height="2"/><rect x="7" y="7" width="2" height="2"/><rect x="11" y="7" width="2" height="2"/><rect x="3" y="11" width="2" height="2"/><rect x="7" y="11" width="2" height="2"/><rect x="11" y="11" width="2" height="2"/></g></svg>
<div class="sbv" style="left:452px;top:575px;width:16px;height:244px"></div>
<div class="sa" style="left:452px;top:575px;width:16px;height:16px"><svg width="15" height="15" viewBox="0 0 15 15"><path d="M3.5 9.5 L7.5 5.5 L11.5 9.5" fill="none" stroke="#4d6185" stroke-width="2.4"/></svg></div>
<div class="sa" style="left:452px;top:803px;width:16px;height:16px"><svg width="15" height="15" viewBox="0 0 15 15"><path d="M3.5 6 L7.5 10 L11.5 6" fill="none" stroke="#4d6185" stroke-width="2.4"/></svg></div>
<div class="th" style="left:452px;top:592px;width:16px;height:199px"><b class="gv" style="top:94px"></b></div>
<div class="sbh" style="left:200px;top:820px;width:252px;height:17px"></div>
<div class="sa" style="left:200px;top:820px;width:16px;height:17px"><svg width="15" height="16" viewBox="0 0 15 15"><path d="M9.5 3.5 L5.5 7.5 L9.5 11.5" fill="none" stroke="#4d6185" stroke-width="2.4"/></svg></div>
<div class="sa" style="left:436px;top:820px;width:16px;height:17px"><svg width="15" height="16" viewBox="0 0 15 15"><path d="M6 3.5 L10 7.5 L6 11.5" fill="none" stroke="#4d6185" stroke-width="2.4"/></svg></div>
<div class="thh" style="left:217px;top:820px;width:118px;height:17px"><b class="gh" style="left:54px"></b></div>
<svg class="abs" style="position:absolute;left:452px;top:821px" width="16" height="16"><g fill="#b8b4a2"><rect x="11" y="3" width="2" height="2"/><rect x="7" y="7" width="2" height="2"/><rect x="11" y="7" width="2" height="2"/><rect x="3" y="11" width="2" height="2"/><rect x="7" y="11" width="2" height="2"/><rect x="11" y="11" width="2" height="2"/></g></svg>
<div class="sbv" style="left:1250px;top:508px;width:16px;height:291px"></div>
<div class="sa" style="left:1250px;top:508px;width:16px;height:16px"><svg width="15" height="15" viewBox="0 0 15 15"><path d="M3.5 9.5 L7.5 5.5 L11.5 9.5" fill="none" stroke="#4d6185" stroke-width="2.4"/></svg></div>
<div class="sa" style="left:1250px;top:783px;width:16px;height:16px"><svg width="15" height="15" viewBox="0 0 15 15"><path d="M3.5 6 L7.5 10 L11.5 6" fill="none" stroke="#4d6185" stroke-width="2.4"/></svg></div>
<div class="th" style="left:1250px;top:738px;width:16px;height:45px"><b class="gv" style="top:17px"></b></div>
<div class="sbh" style="left:476px;top:799px;width:773px;height:17px"></div>
<div class="sa" style="left:476px;top:799px;width:16px;height:17px"><svg width="15" height="16" viewBox="0 0 15 15"><path d="M9.5 3.5 L5.5 7.5 L9.5 11.5" fill="none" stroke="#4d6185" stroke-width="2.4"/></svg></div>
<div class="sa" style="left:1233px;top:799px;width:16px;height:17px"><svg width="15" height="16" viewBox="0 0 15 15"><path d="M6 3.5 L10 7.5 L6 11.5" fill="none" stroke="#4d6185" stroke-width="2.4"/></svg></div>
<div class="thh" style="left:493px;top:799px;width:501px;height:17px"><b class="gh" style="left:245px"></b></div>
<!-- command input -->
<div class="inp mono" style="left:475px;top:821px;width:55px;height:17px;padding:1px 0 0 1px;line-height:18px;background:#ece9d8;border-color:#a5a293 #fff #fff #a5a293">0:008&gt;</div>
<div class="abs" style="left:532px;top:822px;width:717px;height:15px;background:#1a1a1a"></div>
<div class="sa" style="left:1250px;top:822px;width:16px;height:8px;border-radius:1px"><svg width="14" height="6"><path d="M5 4.5 L7 2.5 L9 4.5 Z" fill="#4d6185"/></svg></div>
<div class="sa" style="left:1250px;top:830px;width:16px;height:8px;border-radius:1px"><svg width="14" height="6"><path d="M5 2 L7 4 L9 2 Z" fill="#4d6185"/></svg></div>
<!-- status -->
<div id="status"><i style="left:843px"></i><span style="left:851px;letter-spacing:-.3px">Ln 1, Col 1</span><i style="left:902px"></i><span style="left:911px">Sys 0:&lt;Local&gt;</span><i style="left:985px"></i><span style="left:991px;letter-spacing:-.1px">Proc 000:a40</span><i style="left:1058px"></i><span style="left:1065px">Thrd 008:894</span><i style="left:1133px"></i><span class="dis" style="left:1140px;letter-spacing:-1px">ASM</span><i style="left:1164px"></i><span class="dis" style="left:1171px;letter-spacing:-1px">OVR</span><i style="left:1196px"></i><span class="dis" style="left:1202px;letter-spacing:-.8px">CAPS</span><i style="left:1231px"></i><span style="left:1238px;letter-spacing:-.7px">NUM</span></div>
</div>
</body></html>
